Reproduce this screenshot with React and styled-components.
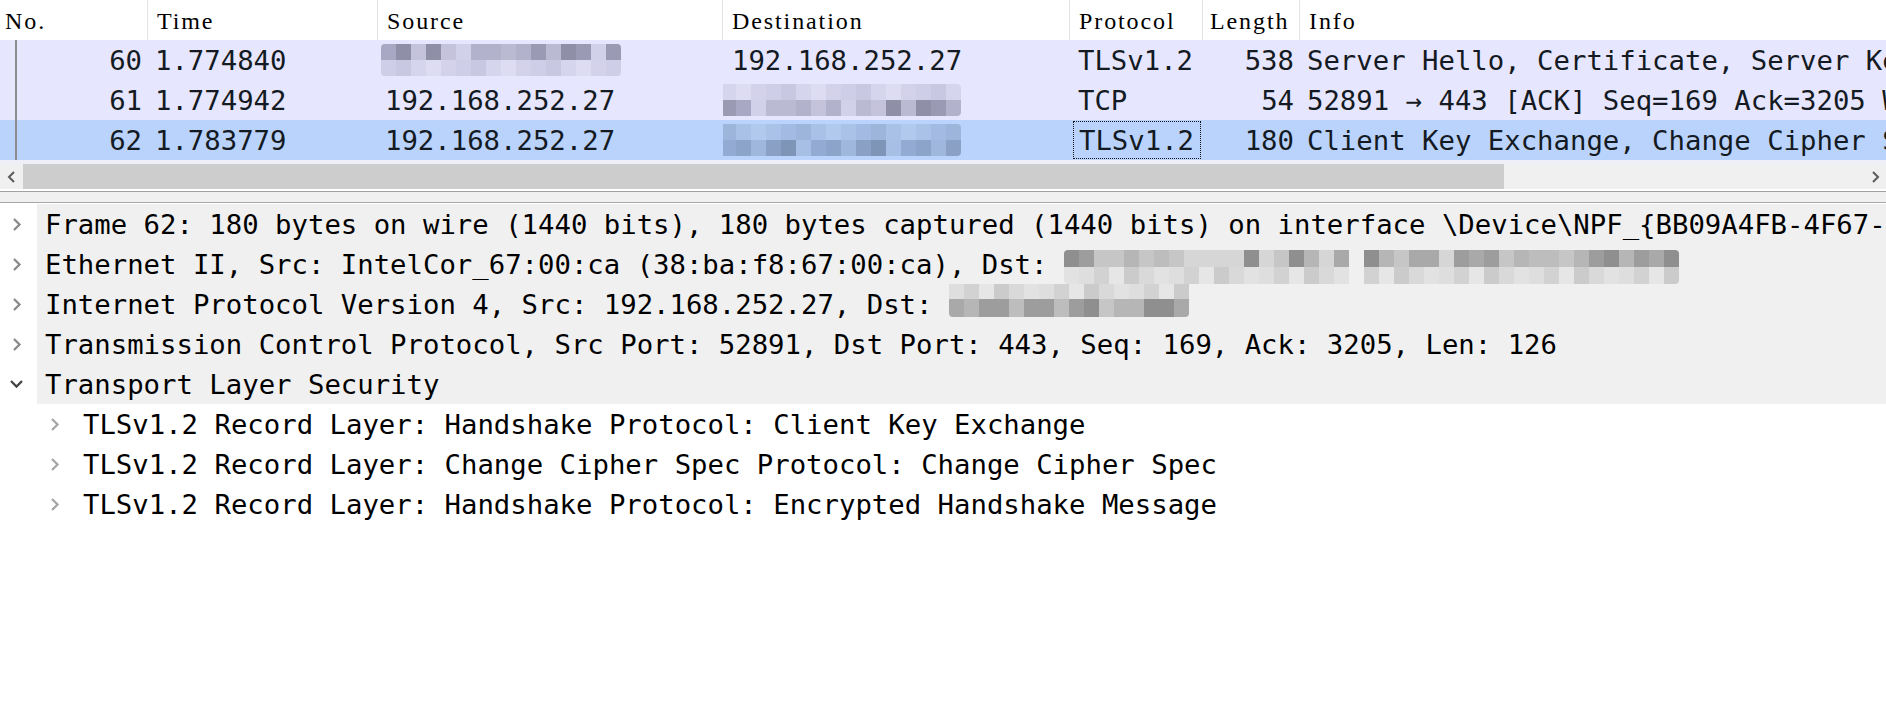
import React from "react";
import styled, { createGlobalStyle } from "styled-components";

const MONO = '"DejaVu Sans Mono", "Liberation Mono", monospace';
const HEAD = '"Liberation Serif", "DejaVu Serif", serif';
const COLS = "148px 230px 345px 347px 133px 97px 1fr";

const GlobalStyle = createGlobalStyle`
  html, body {
    margin: 0;
    padding: 0;
    background: #ffffff;
    overflow: hidden;
  }
  * {
    box-sizing: border-box;
  }
`;

const Page = styled.div`
  display: flex;
  flex-direction: column;
  width: 100vw;
  height: 100vh;
  background: #ffffff;
  color: #111;
  overflow: hidden;
`;

/* packet list */
const PacketList = styled.div`
  display: flex;
  flex-direction: column;
`;

const HeaderRow = styled.div`
  display: grid;
  grid-template-columns: ${COLS};
  height: 40px;
  background: #ffffff;
`;

const HeaderCell = styled.div`
  display: flex;
  align-items: center;
  padding: 2px 0 0 ${(p) => p.$pad ?? 9}px;
  font-family: ${HEAD};
  font-size: 24px;
  letter-spacing: 1.9px;
  color: #000;
  border-right: ${(p) => (p.$last ? "none" : "1px solid #e3e3e3")};
  white-space: nowrap;
  overflow: hidden;
`;

const PacketRow = styled.div`
  display: grid;
  grid-template-columns: ${COLS};
  height: 40px;
  background: ${(p) => (p.$selected ? "#bad3fd" : "#e7e6ff")};
`;

const Cell = styled.div`
  display: flex;
  align-items: center;
  justify-content: ${(p) => (p.$right ? "flex-end" : "flex-start")};
  padding: ${(p) => (p.$right ? "0 6px 0 0" : `0 0 0 ${p.$pad ?? 8}px`)};
  font-family: ${MONO};
  font-size: 27.3px;
  white-space: nowrap;
  overflow: hidden;
  color: #141a22;
`;

const NoCell = styled.div`
  display: flex;
  align-items: stretch;
  padding-right: 6px;
  font-family: ${MONO};
  font-size: 27.3px;
  color: #141a22;
`;

const RelationMarker = styled.span`
  width: 2px;
  margin-left: 15px;
  background: #8c8c8c;
`;

const NoValue = styled.span`
  flex: 1;
  display: flex;
  align-items: center;
  justify-content: flex-end;
`;

const FocusBox = styled.div`
  flex: 1;
  align-self: stretch;
  display: flex;
  align-items: center;
  margin: 1px 2px 1px 3px;
  padding-left: 5px;
  border: 1.5px dotted #111;
`;

const ListGap = styled.div`
  height: 4px;
  background: #efeffa;
`;

const HScrollbar = styled.div`
  display: flex;
  height: 25px;
  background: #f0f0f0;
`;

const ScrollArrow = styled.div`
  width: 23px;
  display: flex;
  align-items: center;
  justify-content: center;
  color: #5c5c5c;
`;

const ScrollTrack = styled.div`
  flex: 1;
  display: flex;
`;

const ScrollThumb = styled.div`
  background: #cdcdcd;
`;

const Splitter = styled.div`
  margin-top: 2px;
  height: 12px;
  background: #f0f0f0;
  border-top: 1px solid #a0a0a0;
  border-bottom: 1px solid #a8a8a8;
`;

/* packet details */
const DetailPane = styled.div`
  flex: 1;
  padding-top: 1px;
  background: #ffffff;
`;

const DetailRow = styled.div`
  display: flex;
  height: 40px;
  padding-left: ${(p) => p.$level * 38}px;
`;

const Twisty = styled.div`
  width: 37px;
  flex-shrink: 0;
  display: flex;
  align-items: center;
  padding-left: ${(p) => (p.$open ? 9 : 12)}px;
  color: ${(p) => p.$color};
`;

const DetailLabel = styled.div`
  flex: 1;
  display: flex;
  align-items: center;
  padding-left: 8px;
  background: ${(p) => (p.$shaded ? "#f0f0f0" : "transparent")};
  font-family: ${MONO};
  font-size: 27.3px;
  color: #000;
  white-space: pre;
  overflow: hidden;
`;

/* redacted (pixelated) areas */
const MosaicGrid = styled.span`
  display: inline-grid;
  grid-template-columns: repeat(${(p) => p.$cols}, 15px);
  grid-auto-rows: ${(p) => p.$rowH}px;
  flex-shrink: 0;
  margin-left: ${(p) => p.$shift || 0}px;
  margin-top: ${(p) => p.$lift || 0}px;
  border-radius: 4px;
  overflow: hidden;
`;

const MosaicBlock = styled.span`
  display: block;
`;

const PALETTES = {
  gray: {
    dark: ["#a9a9a9", "#b6b6b6", "#8f8f8f", "#c6c6c6", "#d6d6d6", "#9d9d9d", "#bdbdbd"],
    light: ["#dedede", "#d2d2d2", "#e6e6e6", "#cbcbcb", "#d9d9d9", "#e2e2e2"],
  },
  lavender: {
    dark: ["#b3b2cc", "#9a9ab4", "#c4c3db", "#a8a8c4", "#d2d1ea", "#8f90a8", "#babad2"],
    light: ["#d6d5ee", "#cfcee8", "#dddcf3", "#c9c8e2", "#d3d2ea"],
  },
  blue: {
    dark: ["#9fb7dc", "#8aa1c5", "#7f95b8", "#a7bfe5", "#93abd2", "#8ca4ca"],
    light: ["#a9c1e6", "#a3bbe3", "#b2c9ee", "#9db5db", "#aac2e8"],
  },
};

function Mosaic({ cols, rows = 2, rowH = 16, seed = 1, tone = "gray", darkTop = true, gaps = [], shift, lift }) {
  const pal = PALETTES[tone];
  let s = seed;
  const blocks = [];
  for (let r = 0; r < rows; r++) {
    for (let c = 0; c < cols; c++) {
      s = (s * 9301 + 49297) % 233280;
      const dark = darkTop ? r === 0 : r === rows - 1;
      const set = dark ? pal.dark : pal.light;
      const color = gaps.includes(c) ? "transparent" : set[s % set.length];
      blocks.push(<MosaicBlock key={`${r}-${c}`} style={{ background: color }} />);
    }
  }
  return (
    <MosaicGrid $cols={cols} $rowH={rowH} $shift={shift} $lift={lift}>
      {blocks}
    </MosaicGrid>
  );
}

const Chevron = ({ open }) =>
  open ? (
    <svg width="15" height="10" viewBox="0 0 15 10">
      <polyline points="2,2 7.5,7.5 13,2" fill="none" stroke="currentColor" strokeWidth="2.3" />
    </svg>
  ) : (
    <svg width="10" height="15" viewBox="0 0 10 15">
      <polyline points="2,2 7.5,7.5 2,13" fill="none" stroke="currentColor" strokeWidth="2.3" />
    </svg>
  );

const packets = [
  {
    no: 60,
    time: "1.774840",
    source: { mosaic: { seed: 7, tone: "lavender" } },
    dest: "192.168.252.27",
    proto: "TLSv1.2",
    len: 538,
    info: "Server Hello, Certificate, Server Key Exchange, Server Hello Done",
  },
  {
    no: 61,
    time: "1.774942",
    source: "192.168.252.27",
    dest: { mosaic: { seed: 23, tone: "lavender", darkTop: false } },
    proto: "TCP",
    len: 54,
    info: "52891 → 443 [ACK] Seq=169 Ack=3205 Win=131328 Len=0",
  },
  {
    no: 62,
    time: "1.783779",
    source: "192.168.252.27",
    dest: { mosaic: { seed: 41, tone: "blue", darkTop: false } },
    proto: "TLSv1.2",
    len: 180,
    info: "Client Key Exchange, Change Cipher Spec, Encrypted Handshake Message",
    selected: true,
  },
];

const renderAddr = (value, shift) =>
  typeof value === "string" ? value : <Mosaic cols={16} shift={shift} {...value.mosaic} />;

const details = [
  {
    level: 0,
    text:
      "Frame 62: 180 bytes on wire (1440 bits), 180 bytes captured (1440 bits) on interface \\Device\\NPF_{BB09A4FB-4F67-4C7E-9D2A-6B1F0E3C5A21}, id 0",
  },
  {
    level: 0,
    text: "Ethernet II, Src: IntelCor_67:00:ca (38:ba:f8:67:00:ca), Dst: ",
    mosaic: { cols: 41, seed: 11, gaps: [19], rowH: 17, lift: 5 },
  },
  {
    level: 0,
    text: "Internet Protocol Version 4, Src: 192.168.252.27, Dst: ",
    mosaic: { cols: 16, seed: 5, darkTop: false, rowH: 18, lift: -10 },
  },
  {
    level: 0,
    text: "Transmission Control Protocol, Src Port: 52891, Dst Port: 443, Seq: 169, Ack: 3205, Len: 126",
  },
  { level: 0, text: "Transport Layer Security", open: true },
  { level: 1, text: "TLSv1.2 Record Layer: Handshake Protocol: Client Key Exchange" },
  { level: 1, text: "TLSv1.2 Record Layer: Change Cipher Spec Protocol: Change Cipher Spec" },
  { level: 1, text: "TLSv1.2 Record Layer: Handshake Protocol: Encrypted Handshake Message" },
];

export default function App() {
  return (
    <Page>
      <GlobalStyle />
      <PacketList>
        <HeaderRow>
          <HeaderCell $pad={5}>No.</HeaderCell>
          <HeaderCell>Time</HeaderCell>
          <HeaderCell>Source</HeaderCell>
          <HeaderCell>Destination</HeaderCell>
          <HeaderCell>Protocol</HeaderCell>
          <HeaderCell $pad={7}>Length</HeaderCell>
          <HeaderCell $last>Info</HeaderCell>
        </HeaderRow>
        {packets.map((p) => (
          <PacketRow key={p.no} $selected={p.selected}>
            <NoCell>
              <RelationMarker />
              <NoValue>{p.no}</NoValue>
            </NoCell>
            <Cell $pad={7}>{p.time}</Cell>
            <Cell $pad={7}>{renderAddr(p.source, -4)}</Cell>
            <Cell $pad={9}>{renderAddr(p.dest, -11)}</Cell>
            {p.selected ? (
              <Cell $pad={0}>
                <FocusBox>{p.proto}</FocusBox>
              </Cell>
            ) : (
              <Cell $pad={8}>{p.proto}</Cell>
            )}
            <Cell $right>{p.len}</Cell>
            <Cell $pad={7}>{p.info}</Cell>
          </PacketRow>
        ))}
        <ListGap />
        <HScrollbar>
          <ScrollArrow>
            <svg width="10" height="14" viewBox="0 0 10 14">
              <polyline points="7,2 2,7 7,12" fill="none" stroke="currentColor" strokeWidth="2" />
            </svg>
          </ScrollArrow>
          <ScrollTrack>
            <ScrollThumb style={{ width: `${(1481 / 1840) * 100}%` }} />
          </ScrollTrack>
          <ScrollArrow>
            <svg width="10" height="14" viewBox="0 0 10 14">
              <polyline points="3,2 8,7 3,12" fill="none" stroke="currentColor" strokeWidth="2" />
            </svg>
          </ScrollArrow>
        </HScrollbar>
      </PacketList>
      <Splitter />
      <DetailPane>
        {details.map((d, i) => (
          <DetailRow key={i} $level={d.level}>
            <Twisty $open={d.open} $color={d.open ? "#454545" : d.level ? "#a6a6a6" : "#8a8a8a"}>
              <Chevron open={d.open} />
            </Twisty>
            <DetailLabel $shaded={d.level === 0}>
              {d.text}
              {d.mosaic && <Mosaic {...d.mosaic} />}
            </DetailLabel>
          </DetailRow>
        ))}
      </DetailPane>
    </Page>
  );
}
